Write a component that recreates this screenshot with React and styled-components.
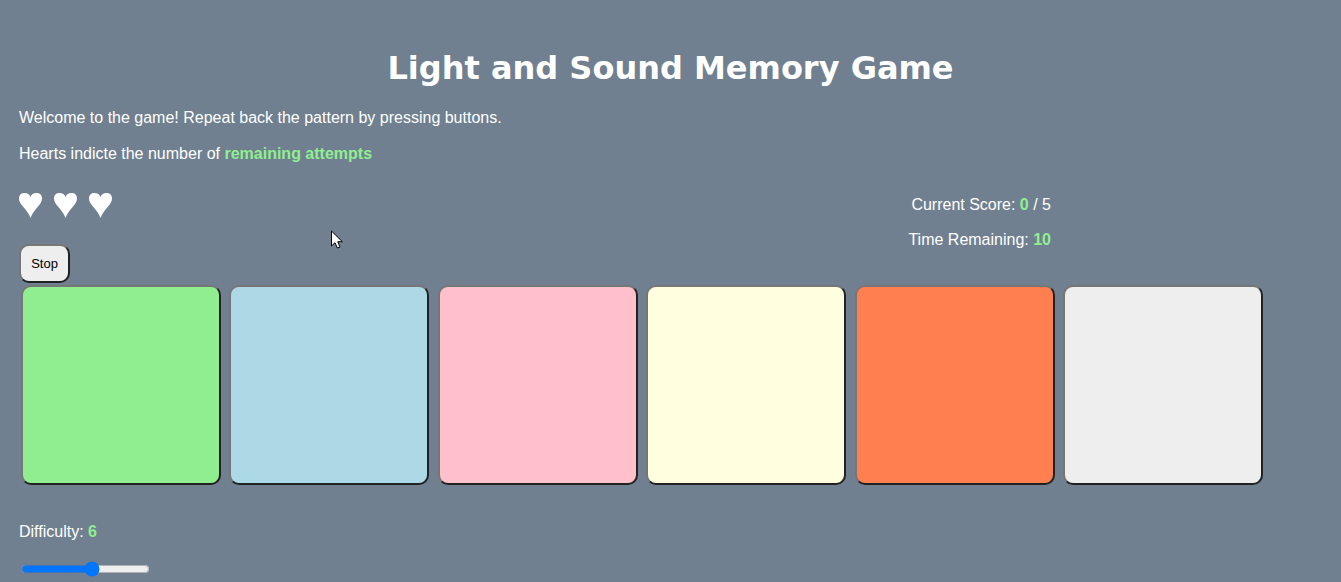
import React, { Fragment, useState } from "react";
import styled, { createGlobalStyle } from "styled-components";

const GlobalStyle = createGlobalStyle`
  body {
    margin: 0;
    background: slategray;
    color: white;
    font-family: "Liberation Sans", Arial, sans-serif;
    font-size: 16px;
    line-height: 18px;
    overflow: hidden;
  }
`;

const Page = styled.main`
  padding: 48px 19px 0;
`;

const Title = styled.h1`
  margin: 0 0 20px;
  text-align: center;
  font-family: "DejaVu Sans", Verdana, sans-serif;
  font-size: 32px;
  line-height: 41px;
`;

const Text = styled.p`
  margin: 0 0 18px;
`;

const Accent = styled.strong`
  color: lightgreen;
`;

const Status = styled.div`
  display: flex;
  justify-content: space-between;
`;

const Controls = styled.div`
  display: flex;
  flex-direction: column;
  align-items: flex-start;
  gap: 26px;
  padding-top: 12px;
`;

const Hearts = styled.div`
  display: flex;
  gap: 12px;
`;

const Heart = styled.svg`
  width: 23px;
  height: 25px;
  fill: white;
`;

const Scores = styled.div`
  padding-top: 15px;
  margin-right: 271px;
  text-align: right;
`;

const ScoreLine = styled.p`
  margin: 0 0 17px;

  &:last-child {
    margin-bottom: 0;
  }
`;

const GameButton = styled.button`
  border: 2px solid;
  border-color: #767676 #212121 #212121 #767676;
  border-radius: 10px;
  color: black;
  font-family: "Liberation Sans", Arial, sans-serif;
  font-size: 13px;
  background: ${(p) => p.$color || "#eeeeee"};
`;

const StopButton = styled(GameButton)`
  width: 51px;
  height: 39px;
  padding: 0;
`;

const Pads = styled.div`
  padding: 0;
`;

const Pad = styled(GameButton)`
  width: 200px;
  height: 200px;
  margin: 2px;
  vertical-align: top;
`;

const Difficulty = styled.label`
  display: block;
  margin-top: 36px;
`;

const Slider = styled.input`
  display: block;
  width: 129px;
  height: 16px;
  margin: 20px 2px 0;
`;

const Cursor = styled.svg`
  position: absolute;
  left: 331px;
  top: 230px;
  width: 12px;
  height: 19px;
`;

const pads = [
  ["Green", "lightgreen"],
  ["Blue", "lightblue"],
  ["Pink", "pink"],
  ["Yellow", "lightyellow"],
  ["Coral", "coral"],
  ["Gray", "#eeeeee"],
];

export default function App() {
  const [difficulty, setDifficulty] = useState(6);
  return (
    <>
      <GlobalStyle />
      <Page>
        <Title>Light and Sound Memory Game</Title>
        <Text>Welcome to the game! Repeat back the pattern by pressing buttons.</Text>
        <Text>
          Hearts indicte the number of <Accent>remaining attempts</Accent>
        </Text>
        <Status>
          <Controls>
            <Hearts role="img" aria-label="Three attempts left">
              {[1, 2, 3].map((n) => (
                <Heart key={n} viewBox="0 0 23 25">
                  <path d="M11.500 25C10 21 7.500 17.500 4 13.500C1.500 10.500 0 8.500 0 5.500C0 2 2.200 0 5.500 0C8.500 0 10.700 1.500 11.500 4C12.300 1.500 14.500 0 17.500 0C20.800 0 23 2 23 5.500C23 8.500 21.500 10.500 19 13.500C15.500 17.500 13 21 11.500 25Z" />
                </Heart>
              ))}
            </Hearts>
            <StopButton>Stop</StopButton>
          </Controls>
          <Scores>
            <ScoreLine>
              Current Score: <Accent>0</Accent> / 5
            </ScoreLine>
            <ScoreLine>
              Time Remaining: <Accent>10</Accent>
            </ScoreLine>
          </Scores>
        </Status>
        <Pads>
          {pads.map(([name, color]) => (
            <Fragment key={name}>
              <Pad $color={color} aria-label={name} />{" "}
            </Fragment>
          ))}
        </Pads>
        <Difficulty htmlFor="difficulty">
          Difficulty: <Accent>{difficulty}</Accent>
        </Difficulty>
        <Slider
          id="difficulty"
          type="range"
          min="1"
          max="10"
          value={difficulty}
          onChange={(e) => setDifficulty(Number(e.target.value))}
        />
      </Page>
      <Cursor viewBox="0 0 12 19" aria-hidden="true">
        <path
          d="M.5 1V16L4 12.700L6.300 18L9 17L6.700 11.700H11.300Z"
          fill="white"
          stroke="black"
        />
      </Cursor>
    </>
  );
}
